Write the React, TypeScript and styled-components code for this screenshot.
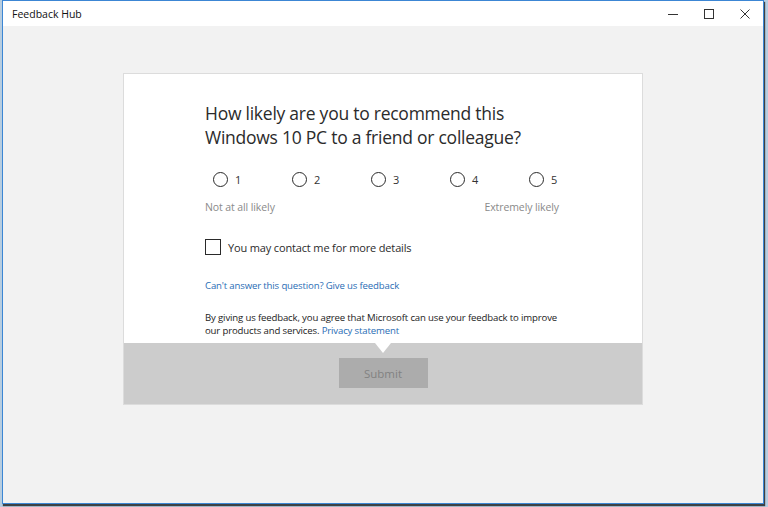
import React, { useState } from 'react'
import styled, { createGlobalStyle } from 'styled-components'

const GlobalStyle = createGlobalStyle`
  html, body {
    margin: 0;
    padding: 0;
    background: #a9c2d8;
  }
  * { box-sizing: border-box; }
`

const Desktop = styled.div`
  width: 768px;
  height: 507px;
  padding: 0 4px 3px 2px;
  background: #b7cde0;
`

const Window = styled.div`
  display: flex;
  flex-direction: column;
  height: 504px;
  border: 1px solid #3c86d4;
  background: #f2f2f2;
  box-shadow: 1px 2px 1px rgba(40, 40, 40, 0.85);
  font-family: 'Open Sans', 'Noto Sans', sans-serif;
`

const TitleBar = styled.div`
  display: flex;
  align-items: center;
  height: 25px;
  padding-left: 9px;
  background: #ffffff;
`

const Title = styled.div`
  flex: 1;
  font-size: 10.5px;
  color: #111;
`

const Controls = styled.div`
  display: flex;
  height: 100%;
`

const ControlButton = styled.div`
  display: flex;
  align-items: center;
  justify-content: center;
  width: 36px;
  height: 100%;
`

const Content = styled.div`
  flex: 1;
  display: flex;
  justify-content: center;
  padding-top: 47px;
`

const Card = styled.div`
  width: 520px;
  height: 332px;
  display: flex;
  flex-direction: column;
  border: 1px solid #dcdcdc;
  background: #ffffff;
`

const Body = styled.div`
  height: 269px;
  padding: 27px 81px 0;
  color: #222;
`

const Question = styled.h1`
  margin: 0;
  font-size: 17.5px;
  line-height: 24px;
  font-weight: 400;
  color: #2b2b2b;
  letter-spacing: -0.25px;
`

const Scale = styled.div`
  display: flex;
  margin-top: 23px;
  padding-left: 8px;
`

const Option = styled.label`
  display: flex;
  flex: none;
  align-items: center;
  gap: 7px;
  width: 79px;
  height: 14px;
  font-size: 11px;
  color: #333;
  cursor: pointer;

  &:last-child {
    width: auto;
  }
`

const Circle = styled.span<{ checked: boolean }>`
  width: 15px;
  height: 15px;
  border-radius: 50%;
  border: 1.6px solid #2a2a2a;
  background: ${({ checked }) => (checked ? 'radial-gradient(circle, #2a2a2a 3px, #fff 3.5px)' : '#fff')};
`

const Anchors = styled.div`
  display: flex;
  justify-content: space-between;
  margin-top: 14px;
  padding-right: 2px;
  font-size: 10.5px;
  color: #8a8a8a;
  letter-spacing: -0.1px;
`

const CheckRow = styled.label`
  display: flex;
  align-items: center;
  gap: 7px;
  margin-top: 25px;
  font-size: 11px;
  color: #2b2b2b;
  letter-spacing: -0.15px;
  cursor: pointer;
`

const Box = styled.span<{ checked: boolean }>`
  display: flex;
  align-items: center;
  justify-content: center;
  width: 16px;
  height: 16px;
  border: 1.6px solid #2a2a2a;
  background: #fff;
  font-size: 11px;
  color: #2a2a2a;
`

const Link = styled.a`
  color: #2a6db5;
  text-decoration: none;
  cursor: pointer;
`

const AskLine = styled.div`
  margin-top: 24px;
  font-size: 9.6px;
  letter-spacing: -0.15px;
`

const Disclaimer = styled.div`
  margin-top: 19px;
  font-size: 9.6px;
  color: #222;
  letter-spacing: -0.15px;
  white-space: nowrap;
`

const DisclaimerLine = styled.div`
  height: 13px;
  line-height: 13px;
`

const Footer = styled.div`
  position: relative;
  flex: 1;
  display: flex;
  justify-content: center;
  padding-top: 15px;
  background: #cccccc;

  &::before {
    content: '';
    position: absolute;
    top: 0;
    left: 50%;
    margin-left: -8px;
    border-left: 8px solid transparent;
    border-right: 8px solid transparent;
    border-top: 10px solid #ffffff;
  }
`

const SubmitButton = styled.button`
  width: 89px;
  height: 30px;
  border: none;
  background: #acacac;
  color: #828282;
  font-family: inherit;
  font-size: 11.5px;
`

export default function App() {
  const [score, setScore] = useState<number | null>(null)
  const [contact, setContact] = useState(false)

  return (
    <>
      <GlobalStyle />
      <Desktop>
        <Window>
          <TitleBar>
            <Title>Feedback Hub</Title>
            <Controls>
              <ControlButton>
                <svg width="10" height="10" viewBox="0 0 10 10">
                  <path d="M0 5.5h10" stroke="#333" strokeWidth="1" />
                </svg>
              </ControlButton>
              <ControlButton>
                <svg width="10" height="10" viewBox="0 0 10 10">
                  <rect x="0.5" y="0.5" width="9" height="9" fill="none" stroke="#333" strokeWidth="1" />
                </svg>
              </ControlButton>
              <ControlButton>
                <svg width="10" height="10" viewBox="0 0 10 10">
                  <path d="M0.5 0.5l9 9M9.5 0.5l-9 9" stroke="#333" strokeWidth="1" />
                </svg>
              </ControlButton>
            </Controls>
          </TitleBar>
          <Content>
            <Card>
              <Body>
                <Question>
                  How likely are you to recommend this
                  <br />
                  Windows 10 PC to a friend or colleague?
                </Question>
                <Scale>
                  {[1, 2, 3, 4, 5].map(n => (
                    <Option key={`opt_${n}`} onClick={() => setScore(n)}>
                      <Circle checked={score === n} />
                      {n}
                    </Option>
                  ))}
                </Scale>
                <Anchors>
                  <span>Not at all likely</span>
                  <span>Extremely likely</span>
                </Anchors>
                <CheckRow onClick={() => setContact(!contact)}>
                  <Box checked={contact}>{contact ? '✓' : ''}</Box>
                  You may contact me for more details
                </CheckRow>
                <AskLine>
                  <Link>Can't answer this question? Give us feedback</Link>
                </AskLine>
                <Disclaimer>
                  <DisclaimerLine>
                    By giving us feedback, you agree that Microsoft can use your feedback to improve
                  </DisclaimerLine>
                  <DisclaimerLine>
                    our products and services. <Link>Privacy statement</Link>
                  </DisclaimerLine>
                </Disclaimer>
              </Body>
              <Footer>
                <SubmitButton disabled>Submit</SubmitButton>
              </Footer>
            </Card>
          </Content>
        </Window>
      </Desktop>
    </>
  )
}
